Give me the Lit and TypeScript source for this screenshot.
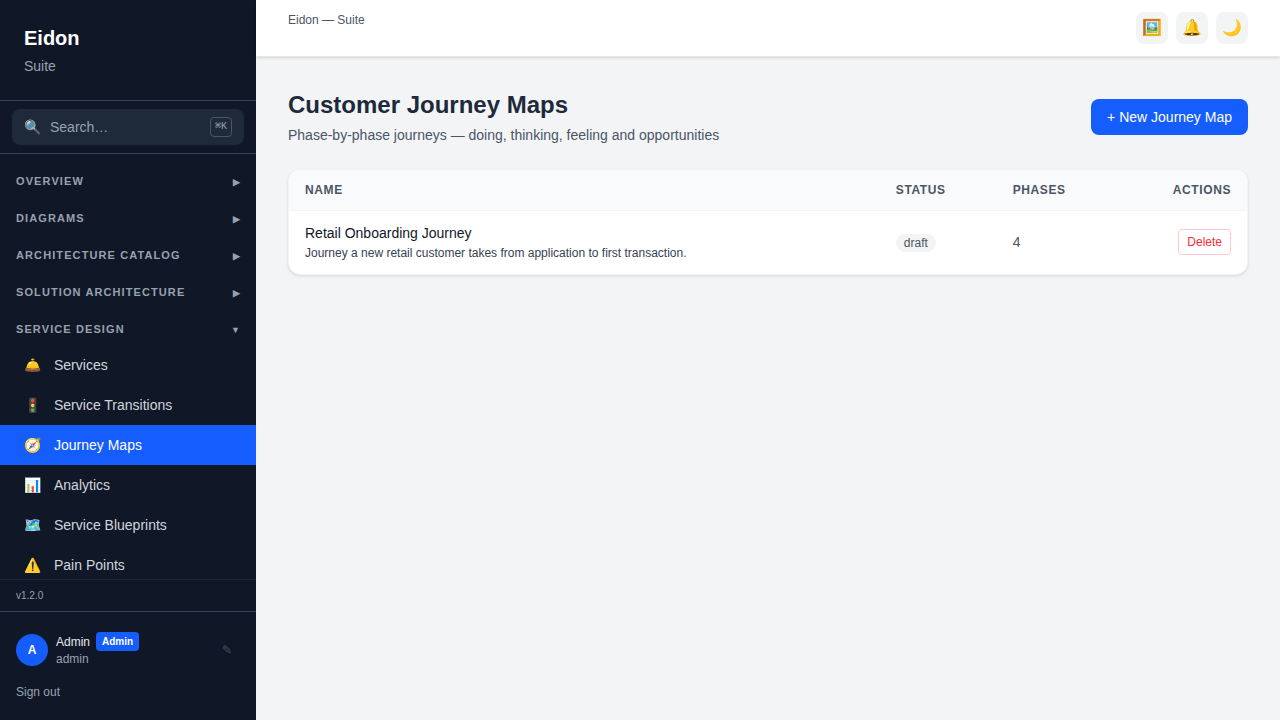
import { LitElement, html, css } from "lit";
import { customElement, state } from "lit/decorators.js";
import { classMap } from "lit/directives/class-map.js";

interface NavItem {
  icon: string;
  label: string;
}

interface NavSection {
  label: string;
  items: NavItem[];
}

interface JourneyMap {
  name: string;
  description: string;
  status: string;
  phases: number;
}

const SECTIONS: NavSection[] = [
  { label: "Overview", items: [] },
  { label: "Diagrams", items: [] },
  { label: "Architecture Catalog", items: [] },
  { label: "Solution Architecture", items: [] },
  {
    label: "Service Design",
    items: [
      { icon: "🛎️", label: "Services" },
      { icon: "🚦", label: "Service Transitions" },
      { icon: "🧭", label: "Journey Maps" },
      { icon: "📊", label: "Analytics" },
      { icon: "🗺️", label: "Service Blueprints" },
      { icon: "⚠️", label: "Pain Points" },
    ],
  },
];

const JOURNEYS: JourneyMap[] = [
  {
    name: "Retail Onboarding Journey",
    description: "Journey a new retail customer takes from application to first transaction.",
    status: "draft",
    phases: 4,
  },
];

const reset = css`
  *,
  *::before,
  *::after {
    box-sizing: border-box;
  }
  h1,
  h2,
  p,
  ul {
    margin: 0;
    padding: 0;
  }
  ul {
    list-style: none;
  }
  button {
    margin: 0;
    padding: 0;
    border: 0;
    background: none;
    color: inherit;
    font: inherit;
    cursor: pointer;
  }
  a {
    color: inherit;
    text-decoration: none;
  }
`;

@customElement("app-sidebar")
export class AppSidebar extends LitElement {
  @state() private open = "Service Design";
  @state() private current = "Journey Maps";

  static styles = [
    reset,
    css`
      :host {
        display: flex;
        flex-direction: column;
        width: 256px;
        flex-shrink: 0;
        min-height: 0;
        background: #101828;
        color: #d1d5dc;
      }
      .brand {
        padding: 24px;
        border-bottom: 1px solid #364153;
      }
      .brand-name {
        font-size: 20px;
        line-height: 28px;
        font-weight: 700;
        color: #fff;
      }
      .brand-sub {
        margin-top: 4px;
        color: #99a1af;
      }
      .search-row {
        padding: 8px 12px;
        border-bottom: 1px solid #364153;
      }
      .search {
        display: flex;
        align-items: center;
        gap: 8px;
        width: 100%;
        padding: 8px 12px;
        border-radius: 8px;
        background: #1e2939;
        color: #99a1af;
        text-align: left;
      }
      .icon {
        width: 18px;
        flex-shrink: 0;
      }
      .search-label {
        flex: 1;
      }
      .shortcut {
        padding: 1px 4px;
        border: 1px solid #4a5565;
        border-radius: 4px;
        font-family: "Liberation Mono", monospace;
        font-size: 10px;
        line-height: 16px;
      }
      .nav {
        flex: 1;
        min-height: 0;
        overflow: hidden;
        padding: 11px 0;
      }
      .sections {
        display: flex;
        flex-direction: column;
        gap: 5px;
      }
      .section-toggle {
        display: flex;
        align-items: baseline;
        justify-content: space-between;
        width: 100%;
        padding: 8px 16px;
        font-size: 11px;
        line-height: 16px;
        font-weight: 700;
        letter-spacing: 1.1px;
        text-transform: uppercase;
        color: #99a1af;
      }
      .chevron {
        font-size: 9px;
        line-height: 12px;
        letter-spacing: 0;
      }
      .item {
        display: flex;
        align-items: center;
        gap: 12px;
        padding: 10px 24px;
      }
      .item.active {
        background: #155dfc;
        color: #fff;
      }
      .version {
        padding: 8px 16px;
        border-top: 1px solid #1e2939;
        font-size: 10px;
        line-height: 15px;
        color: #99a1af;
      }
      .account {
        padding: 16px;
        border-top: 1px solid #364153;
        font-size: 12px;
        line-height: 16px;
      }
      .user {
        display: flex;
        align-items: center;
        gap: 8px;
        padding: 4px 0;
        margin-bottom: 9px;
      }
      .avatar {
        display: grid;
        place-items: center;
        width: 32px;
        height: 32px;
        border-radius: 50%;
        background: #155dfc;
        color: #fff;
        font-weight: 700;
      }
      .who {
        flex: 1;
      }
      .name-row {
        display: flex;
        align-items: center;
        gap: 6px;
        color: #e5e7eb;
      }
      .role {
        padding: 2px 6px;
        border-radius: 4px;
        background: #155dfc;
        color: #fff;
        font-size: 10px;
        line-height: 15px;
        font-weight: 700;
      }
      .login {
        color: #99a1af;
      }
      .edit {
        padding: 0 8px;
        color: #4a5565;
      }
      .sign-out {
        padding: 4px 0;
        color: #99a1af;
      }
    `,
  ];

  render() {
    return html`
      <div class="brand">
        <h2 class="brand-name">Eidon</h2>
        <p class="brand-sub">Suite</p>
      </div>
      <div class="search-row">
        <button class="search" type="button">
          <span class="icon" aria-hidden="true">🔍</span>
          <span class="search-label">Search…</span>
          <kbd class="shortcut">⌘K</kbd>
        </button>
      </div>
      <nav class="nav" aria-label="Main">
        <ul class="sections">
          ${SECTIONS.map((s) => this.renderSection(s))}
        </ul>
      </nav>
      <div class="version">v1.2.0</div>
      <div class="account">
        <div class="user">
          <span class="avatar" aria-hidden="true">A</span>
          <div class="who">
            <div class="name-row"><span>Admin</span><span class="role">Admin</span></div>
            <div class="login">admin</div>
          </div>
          <button class="edit" type="button" aria-label="Edit profile">✎</button>
        </div>
        <button class="sign-out" type="button">Sign out</button>
      </div>
    `;
  }

  private renderSection(section: NavSection) {
    const expanded = section.label === this.open;
    return html`
      <li>
        <button
          class="section-toggle"
          type="button"
          aria-expanded=${expanded ? "true" : "false"}
          @click=${() => (this.open = expanded ? "" : section.label)}
        >
          <span>${section.label}</span>
          <span class="chevron" aria-hidden="true">${expanded ? "▼" : "▶"}</span>
        </button>
        ${expanded
          ? html`<ul>
              ${section.items.map(
                (item) => html`<li>
                  <a
                    href="#"
                    class=${classMap({ item: true, active: item.label === this.current })}
                    @click=${() => (this.current = item.label)}
                    ><span class="icon" aria-hidden="true">${item.icon}</span><span>${item.label}</span></a
                  >
                </li>`
              )}
            </ul>`
          : null}
      </li>
    `;
  }
}

@customElement("journey-table")
export class JourneyTable extends LitElement {
  static styles = [
    reset,
    css`
      :host {
        display: block;
        overflow: hidden;
        border: 1px solid #f3f4f6;
        border-radius: 12px;
        background: #fff;
        box-shadow: 0 1px 3px rgb(0 0 0 / 0.1), 0 1px 2px -1px rgb(0 0 0 / 0.1);
      }
      .table {
        width: 100%;
        border-collapse: collapse;
        text-align: left;
      }
      .head {
        background: #f9fafb;
        border-bottom: 1px solid #f3f4f6;
      }
      .th {
        padding: 12px 16px;
        font-size: 12px;
        line-height: 16px;
        font-weight: 700;
        letter-spacing: 0.6px;
        text-transform: uppercase;
        color: #4a5565;
      }
      .row {
        height: 63px;
      }
      .td {
        padding: 12px 16px;
        color: #4a5565;
      }
      .end {
        text-align: right;
      }
      .name {
        color: #101828;
      }
      .description {
        margin-top: 2px;
        font-size: 12px;
        line-height: 16px;
        color: #364153;
      }
      .status {
        padding: 2px 8px;
        border-radius: 9px;
        background: #f3f4f6;
        font-size: 12px;
        line-height: 16px;
      }
      .delete {
        padding: 4px 8px;
        border: 1px solid #ffc9c9;
        border-radius: 4px;
        font-size: 12px;
        line-height: 16px;
        color: #fb2c36;
      }
    `,
  ];

  render() {
    return html`
      <table class="table">
        <thead class="head">
          <tr>
            <th class="th" scope="col">Name</th>
            <th class="th" scope="col">Status</th>
            <th class="th" scope="col">Phases</th>
            <th class="th end" scope="col">Actions</th>
          </tr>
        </thead>
        <tbody>
          ${JOURNEYS.map(
            (j) => html`<tr class="row">
              <td class="td">
                <a class="name" href="#">${j.name}</a>
                <p class="description">${j.description}</p>
              </td>
              <td class="td"><span class="status">${j.status}</span></td>
              <td class="td">${j.phases}</td>
              <td class="td end"><button class="delete" type="button">Delete</button></td>
            </tr>`
          )}
        </tbody>
      </table>
    `;
  }
}

@customElement("app-root")
export class AppRoot extends LitElement {
  static styles = [
    reset,
    css`
      :host {
        display: flex;
        height: 100vh;
        overflow: hidden;
        background: #f3f4f6;
        color: #101828;
        font-family: "Liberation Sans", Arial, sans-serif;
        font-size: 14px;
        line-height: 20px;
      }
      .page {
        flex: 1;
        min-width: 0;
        display: flex;
        flex-direction: column;
      }
      .topbar {
        display: flex;
        justify-content: space-between;
        padding: 12px 32px;
        border-bottom: 1px solid #e5e7eb;
        background: #fff;
        box-shadow: 0 1px 3px rgb(0 0 0 / 0.1), 0 1px 2px -1px rgb(0 0 0 / 0.1);
      }
      .crumb {
        font-size: 12px;
        line-height: 16px;
        color: #4a5565;
      }
      .tools {
        display: flex;
        gap: 8px;
      }
      .tool {
        display: grid;
        place-items: center;
        width: 32px;
        height: 32px;
        border-radius: 8px;
        background: #f3f4f6;
        font-size: 16px;
        line-height: 24px;
      }
      .content {
        flex: 1;
        overflow: auto;
        padding: 32px;
      }
      .heading {
        display: flex;
        align-items: center;
        justify-content: space-between;
        gap: 16px;
        margin-bottom: 24px;
      }
      .title {
        font-size: 24px;
        line-height: 32px;
        font-weight: 700;
        color: #1e2939;
      }
      .subtitle {
        margin-top: 4px;
        color: #4a5565;
      }
      .primary {
        padding: 8px 16px;
        border-radius: 8px;
        background: #155dfc;
        color: #fff;
        white-space: nowrap;
      }
    `,
  ];

  render() {
    return html`
      <app-sidebar></app-sidebar>
      <div class="page">
        <header class="topbar">
          <div class="crumb">Eidon — Suite</div>
          <div class="tools">
            <button class="tool" type="button" aria-label="Gallery">🖼️</button>
            <button class="tool" type="button" aria-label="Notifications">🔔</button>
            <button class="tool" type="button" aria-label="Dark mode">🌙</button>
          </div>
        </header>
        <main class="content">
          <div class="heading">
            <div>
              <h1 class="title">Customer Journey Maps</h1>
              <p class="subtitle">Phase-by-phase journeys — doing, thinking, feeling and opportunities</p>
            </div>
            <button class="primary" type="button">+ New Journey Map</button>
          </div>
          <journey-table></journey-table>
        </main>
      </div>
    `;
  }
}
